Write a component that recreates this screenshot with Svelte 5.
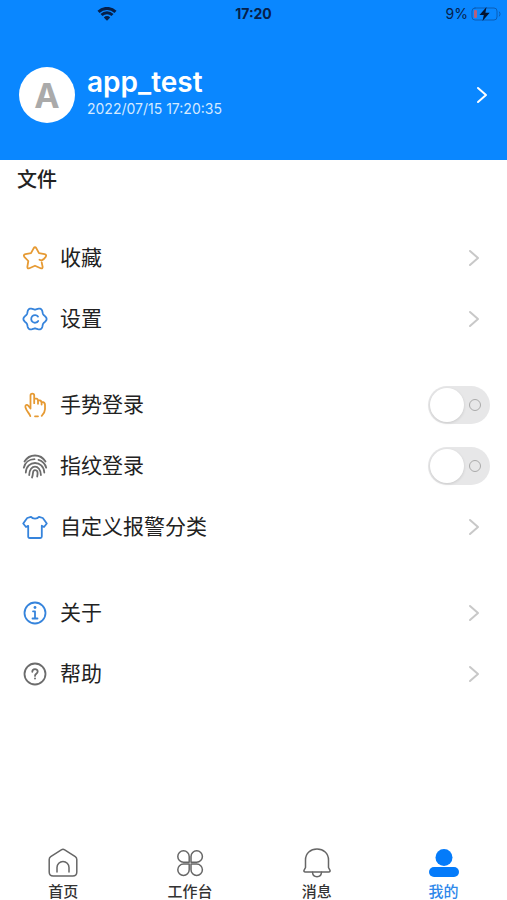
<script lang="ts">
    type Row = { icon: string; label: string; toggle?: boolean };

    const groups: Row[][] = [
        [
            { icon: "star", label: "收藏" },
            { icon: "gear", label: "设置" },
        ],
        [
            { icon: "hand", label: "手势登录", toggle: true },
            { icon: "finger", label: "指纹登录", toggle: true },
            { icon: "shirt", label: "自定义报警分类" },
        ],
        [
            { icon: "info", label: "关于" },
            { icon: "help", label: "帮助" },
        ],
    ];

    const tabs = [
        { icon: "home", label: "首页" },
        { icon: "work", label: "工作台" },
        { icon: "bell", label: "消息" },
        { icon: "me", label: "我的" },
    ];

    let current = $state("me");
    let enabled = $state<Record<string, boolean>>({ hand: false, finger: false });

    // six-lobed outline of the settings icon
    const gearPoints = Array.from({ length: 72 }, (_, i) => {
        const angle = (i / 72) * Math.PI * 2;
        const radius = 10.5 + 1.1 * Math.cos(angle * 6);
        const x = 13 + radius * Math.cos(angle);
        const y = 13 + radius * Math.sin(angle);
        return `${x.toFixed(2)},${y.toFixed(2)}`;
    }).join(" ");
</script>

{#snippet rowIcon(name: string)}
    <svg class="row-icon {name}" viewBox="0 0 26 26" aria-hidden="true">
        {#if name === "star"}
            <path
                d="M19.700 17.500l.900 4.100Q20.900 24 18.600 23.200L13 20.700 7.400 23.200Q5.100 24 5.400 21.600L6.300 16 2.300 11.800Q1 9.600 3.500 9.100L9 8.200 11.600 3.300Q13 1.200 14.400 3.300L17 8.200 22.500 9.100Q25 9.600 23.700 11.800L21.500 14.300Q19.500 16 17.500 14.800"
            />
        {:else if name === "gear"}
            <polygon points={gearPoints} />
            <path d="M16 10.600a3.800 3.800 0 1 0 .2 4.400" />
        {:else if name === "hand"}
            <path
                d="M8.300 24.200C8 22 4.600 19.500 3.500 15.500c-.700-2.500 1.300-3.600 2.800-1.700l2.200 2.700V3.500c0-2.600 3.700-2.600 3.700 0v7.700M12.200 6.400c2.600-.2 3.700.6 3.800 2.400v3M16 8.200c2.200-.1 3.500.6 3.600 2.500v1.800M19.600 9.800c2.300 0 3.400 1 3.400 3v4.400c0 3-1.700 4.800-3.300 6.700M13 24.300h3"
            />
        {:else if name === "finger"}
            <path
                d="M2.500 8.500C7.500.500 18.500.500 23.500 8.500M1.800 14.700C3 9.300 7.500 6.300 12.500 6.200M16.500 6.800C20.500 8 23.300 11 24.200 14.700M3.800 19.500C4.300 6.800 21.700 6.800 22.300 19.500M7.200 22C7.400 10.800 18.600 10.800 18.900 22M10 24.500C11.800 21 9.800 17.200 13 17.200S15.800 20.500 15.200 23.500"
            />
        {:else if name === "shirt"}
            <path
                d="M9 2.800C10.500 5.200 15.500 5.200 17 2.800L20.800 4 24.800 9.500 22 13 19.800 11.800V22.500Q19.800 24 18.300 24H7.700Q6.200 24 6.200 22.500V11.800L4 13 1.200 9.500 5.200 4z"
            />
        {:else}
            <circle cx="13" cy="13" r="10.500" />
            {#if name === "info"}
                <path d="M11 11.300h2V18.500M10.500 18.500h5" />
                <circle class="dot" cx="13" cy="7.500" r="1.400" />
            {:else}
                <path d="M10.300 10.800c0-3.600 5.400-3.500 5.400-.3 0 2.300-2.700 2.300-2.700 4.400" />
                <circle class="dot" cx="13" cy="17.500" r="1" />
            {/if}
        {/if}
    </svg>
{/snippet}

{#snippet tabIcon(name: string)}
    <svg class="tab-icon" viewBox="0 0 32 32" aria-hidden="true">
        {#if name === "home"}
            <path
                d="M14.300 2.800L3.700 9.600Q2.200 10.600 2.200 12.500V25q0 4 4 4h19.600q4 0 4-4V12.500q0-1.900-1.500-2.900L17.700 2.800q-1.700-1-3.400 0z"
            />
            <path d="M10 25v-4.500a6 6 0 0 1 12 0V25" />
        {:else if name === "work"}
            <path
                d="M15.200 15.200H9.500A5.700 5.700 0 1 1 15.200 9.500zM17 15.200V9.500a5.700 5.700 0 1 1 5.700 5.700zM15.200 17v5.700A5.700 5.700 0 1 1 9.500 17zM17 17h5.700a5.700 5.700 0 1 1-5.700 5.700z"
            />
        {:else if name === "bell"}
            <path
                d="M4.500 20.500V13C4.500 6.500 9.500 2 16 2s11.500 4.500 11.500 11v7.500l1.500 2.800q.5 1.700-1.300 1.700H4.300Q2.500 25 3 23.300z"
            />
            <path d="M11.500 25.200c.5 6 8.500 6 9 0" />
        {:else}
            <circle class="solid" cx="16" cy="10.500" r="8.500" />
            <rect class="solid" x="1" y="20" width="30" height="10" rx="5" />
        {/if}
    </svg>
{/snippet}

{#snippet chevron()}
    <svg class="chevron" viewBox="0 0 12 18" aria-hidden="true">
        <path d="M2 2l8 7-8 7" />
    </svg>
{/snippet}

<div class="page">
    <header>
        <div class="status">
            <svg class="wifi" viewBox="0 0 20 14" aria-hidden="true">
                <path d="M1.500 4.800a12.300 12.300 0 0 1 17 0M4.500 8a8 8 0 0 1 11 0" />
                <path class="fill" d="M6.800 10.400a4.600 4.600 0 0 1 6.400 0L10 13.700z" />
            </svg>
            <span class="time">17:20</span>
            <span class="battery">
                9%
                <svg viewBox="0 0 30 14" aria-hidden="true">
                    <rect class="case" x="1" y="1" width="25" height="12" rx="3" />
                    <path class="case" d="M28.500 5q1.500 2 0 4" />
                    <rect class="level" x="3" y="3" width="3" height="8" rx="1" />
                    <path class="bolt" d="M15.500 0L8.500 8h4.300L11.500 14l7.200-8.200h-4.300z" />
                </svg>
            </span>
        </div>
        <a class="profile" href="#profile">
            <span class="avatar">A</span>
            <span class="who">
                <strong>app_test</strong>
                <time datetime="2022-07-15T17:20:35">2022/07/15 17:20:35</time>
            </span>
            {@render chevron()}
        </a>
    </header>

    <main>
        <h1>文件</h1>
        {#each groups as group}
            <ul>
                {#each group as row}
                    <li>
                        {#if row.toggle}
                            <label class="row">
                                {@render rowIcon(row.icon)}
                                <span class="name">{row.label}</span>
                                <input type="checkbox" role="switch" bind:checked={enabled[row.icon]} />
                            </label>
                        {:else}
                            <a class="row" href="#{row.icon}">
                                {@render rowIcon(row.icon)}
                                <span class="name">{row.label}</span>
                                {@render chevron()}
                            </a>
                        {/if}
                    </li>
                {/each}
            </ul>
        {/each}
    </main>

    <nav>
        {#each tabs as tab}
            <button class:active={current === tab.icon} onclick={() => (current = tab.icon)}>
                {@render tabIcon(tab.icon)}
                {tab.label}
            </button>
        {/each}
    </nav>
</div>

<style>
    :global(body) {
        margin: 0;
        background: #fff;
    }

    .page {
        display: flex;
        flex-direction: column;
        min-height: 100vh;
        font-family: Inter, "Noto Sans CJK SC", sans-serif;
        color: #222;
    }

    svg {
        flex: none;
        fill: none;
        stroke: currentColor;
        stroke-linecap: round;
        stroke-linejoin: round;
    }

    a {
        color: inherit;
        text-decoration: none;
    }

    header {
        padding-bottom: 36px;
        background: #0a87ff;
    }

    .status {
        display: grid;
        grid-template-columns: 1fr auto 1fr;
        align-items: center;
        height: 27px;
        padding: 0 6px;
        color: #06204a;
        font-size: 14px;
    }

    .wifi {
        width: 20px;
        height: 14px;
        margin-left: 91px;
        stroke-width: 3;
        stroke-linecap: butt;
    }

    .wifi .fill {
        fill: currentColor;
        stroke: none;
    }

    .time {
        font-weight: 700;
    }

    .battery {
        display: flex;
        align-items: center;
        justify-content: flex-end;
        gap: 3px;
    }

    .battery svg {
        width: 30px;
        height: 14px;
    }

    .case {
        stroke: #0b5db5;
    }

    .level {
        fill: #b5607c;
        stroke: none;
    }

    .bolt {
        fill: #041431;
        stroke: none;
    }

    .profile {
        display: flex;
        align-items: center;
        gap: 12px;
        padding: 39px 19px 0;
        color: #fff;
    }

    .avatar {
        display: grid;
        place-items: center;
        width: 56px;
        height: 56px;
        border-radius: 50%;
        background: #fff;
        color: #aaa;
        font-size: 34px;
        font-weight: 700;
    }

    .who {
        display: flex;
        flex: 1;
        flex-direction: column;
        padding-bottom: 4px;
    }

    .who strong {
        font-size: 28px;
        line-height: 32px;
        font-weight: 600;
    }

    .who time {
        color: #d5eaff;
        font-size: 14px;
        line-height: 22px;
    }

    .chevron {
        width: 12px;
        height: 18px;
        stroke-width: 2;
    }

    main {
        flex: 1;
    }

    h1 {
        margin: 0 0 27px;
        padding: 0 17px;
        font-size: 20px;
        line-height: 40px;
        font-weight: 500;
    }

    ul {
        margin: 0 0 25px;
        padding: 0;
        list-style: none;
    }

    .row {
        display: flex;
        align-items: center;
        gap: 12px;
        height: 61px;
        padding: 0 17px 0 22px;
    }

    .row .chevron {
        margin-right: 10px;
        color: #c8c8c8;
    }

    .name {
        flex: 1;
        font-size: 21px;
        line-height: 30px;
    }

    .row-icon {
        width: 26px;
        height: 26px;
        stroke-width: 1.8;
    }

    .row-icon .dot {
        fill: currentColor;
        stroke: none;
    }

    .star,
    .hand {
        color: #e69a33;
    }

    .gear,
    .shirt,
    .info {
        color: #3684dc;
    }

    .finger,
    .help {
        color: #6c6c6c;
    }

    input {
        display: flex;
        align-items: center;
        justify-content: space-between;
        box-sizing: border-box;
        width: 62px;
        height: 38px;
        margin: 0;
        padding: 0 9px 0 2px;
        border-radius: 19px;
        background: #e7e7e8;
        appearance: none;
    }

    input::before {
        width: 34px;
        height: 34px;
        border-radius: 50%;
        background: #fff;
        box-shadow: 0 1px 3px #0002;
        content: "";
    }

    input::after {
        box-sizing: border-box;
        width: 12px;
        height: 12px;
        border: 1px solid #aaa;
        border-radius: 50%;
        content: "";
    }

    input:checked {
        flex-direction: row-reverse;
        padding: 0 2px 0 9px;
        background: #0a87ff;
    }

    nav {
        display: grid;
        grid-template-columns: repeat(4, 1fr);
        height: 53px;
    }

    button {
        display: flex;
        flex-direction: column;
        align-items: center;
        gap: 2px;
        padding: 0;
        border: 0;
        background: none;
        color: #333;
        font: 500 15px/22px Inter, "Noto Sans CJK SC", sans-serif;
    }

    button.active {
        color: #2f88ea;
    }

    .tab-icon {
        width: 32px;
        height: 32px;
        color: #666;
        stroke-width: 1.5;
    }

    .active .tab-icon {
        color: #047bfa;
    }

    .tab-icon .solid {
        fill: currentColor;
        stroke: none;
    }
</style>
